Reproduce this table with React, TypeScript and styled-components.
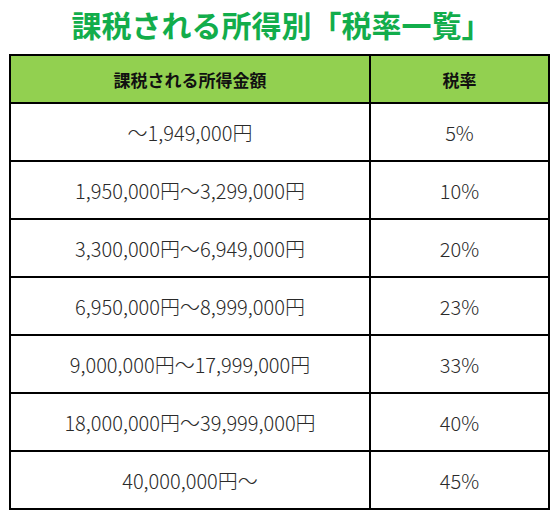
import React from "react";
import styled, { createGlobalStyle } from "styled-components";

const GlobalStyle = createGlobalStyle`
  html, body { margin: 0; padding: 0; background: #ffffff; }
  body { font-family: "Noto Sans CJK JP", "Noto Sans", sans-serif; }
  * { box-sizing: border-box; }
`;

const Page = styled.div`
  width: 556px;
  height: 515px;
  padding-left: 9px;
  display: flex;
  flex-direction: column;
`;

const Title = styled.h1`
  margin: 0;
  width: 541px;
  height: 54px;
  display: flex;
  align-items: center;
  justify-content: center;
  padding: 0 0 6px 4px;
  font-size: 30px;
  font-weight: 700;
  line-height: 1;
  color: #12ad4b;
`;

const Grid = styled.div`
  width: 541px;
  display: grid;
  grid-template-columns: 360px 179px;
  border-top: 2px solid #000;
  border-left: 2px solid #000;
`;

const HeadCell = styled.div`
  height: 48px;
  display: flex;
  align-items: center;
  justify-content: center;
  background: #92d050;
  border-right: 2px solid #000;
  border-bottom: 2px solid #000;
  font-size: 17px;
  font-weight: 700;
  color: #111;
`;

const Cell = styled.div`
  height: 58px;
  display: flex;
  align-items: center;
  justify-content: center;
  border-right: 2px solid #000;
  border-bottom: 2px solid #000;
  font-size: 20px;
  font-weight: 300;
  color: #2a2a2a;
`;

const rows: [string, string][] = [
  ["～1,949,000円", "5%"],
  ["1,950,000円～3,299,000円", "10%"],
  ["3,300,000円～6,949,000円", "20%"],
  ["6,950,000円～8,999,000円", "23%"],
  ["9,000,000円～17,999,000円", "33%"],
  ["18,000,000円～39,999,000円", "40%"],
  ["40,000,000円～", "45%"],
];

export default function App() {
  return (
    <>
      <GlobalStyle />
      <Page>
        <Title>課税される所得別「税率一覧」</Title>
        <Grid>
          <HeadCell>課税される所得金額</HeadCell>
          <HeadCell>税率</HeadCell>
          {rows.map(([range, rate]) => (
            <React.Fragment key={rate}>
              <Cell>{range}</Cell>
              <Cell>{rate}</Cell>
            </React.Fragment>
          ))}
        </Grid>
      </Page>
    </>
  );
}
